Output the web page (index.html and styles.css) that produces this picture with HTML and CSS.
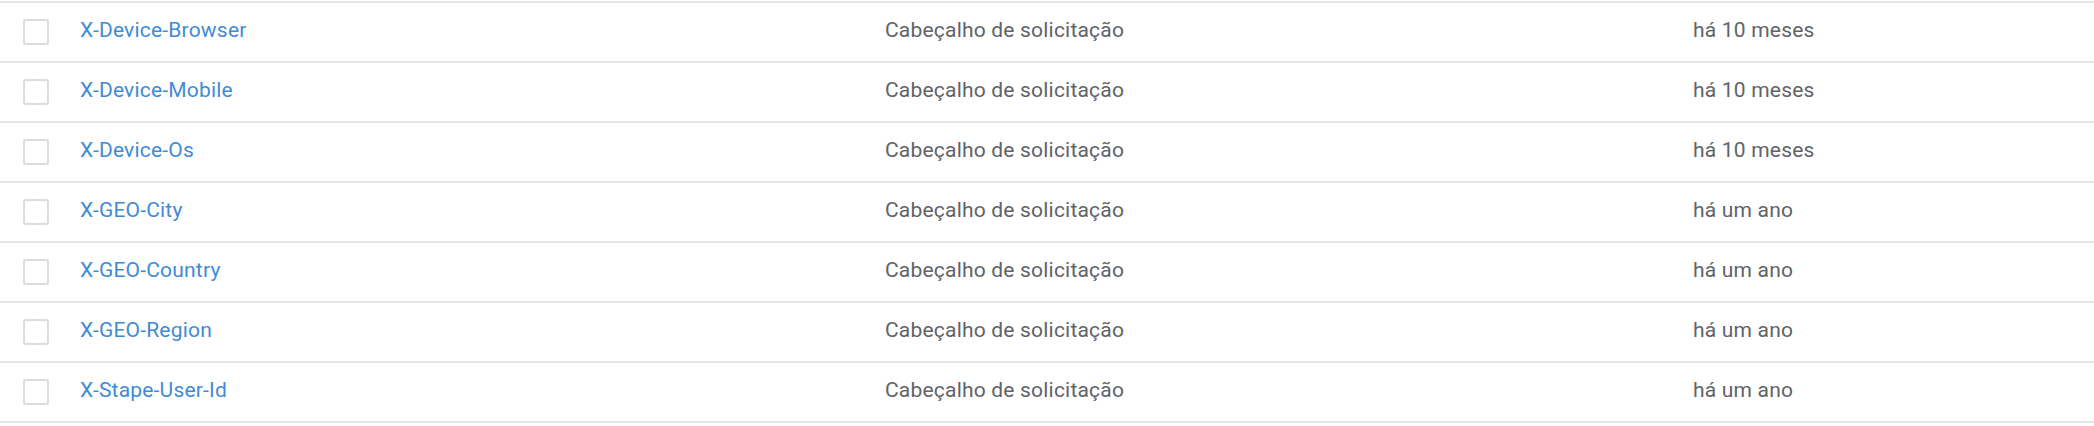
FILE: index.html
```html
<!DOCTYPE html>
<html lang="pt">
<head>
<meta charset="utf-8">
<link rel="stylesheet" href="styles.css">
</head>
<body>
<div class="table">
  <div class="row"><div class="cell check"><span class="box"></span></div><div class="cell name"><a href="#">X-Device-Browser</a></div><div class="cell type">Cabeçalho de solicitação</div><div class="cell date">há 10 meses</div></div>
  <div class="row"><div class="cell check"><span class="box"></span></div><div class="cell name"><a href="#">X-Device-Mobile</a></div><div class="cell type">Cabeçalho de solicitação</div><div class="cell date">há 10 meses</div></div>
  <div class="row"><div class="cell check"><span class="box"></span></div><div class="cell name"><a href="#">X-Device-Os</a></div><div class="cell type">Cabeçalho de solicitação</div><div class="cell date">há 10 meses</div></div>
  <div class="row"><div class="cell check"><span class="box"></span></div><div class="cell name"><a href="#">X-GEO-City</a></div><div class="cell type">Cabeçalho de solicitação</div><div class="cell date">há um ano</div></div>
  <div class="row"><div class="cell check"><span class="box"></span></div><div class="cell name"><a href="#">X-GEO-Country</a></div><div class="cell type">Cabeçalho de solicitação</div><div class="cell date">há um ano</div></div>
  <div class="row"><div class="cell check"><span class="box"></span></div><div class="cell name"><a href="#">X-GEO-Region</a></div><div class="cell type">Cabeçalho de solicitação</div><div class="cell date">há um ano</div></div>
  <div class="row"><div class="cell check"><span class="box"></span></div><div class="cell name"><a href="#">X-Stape-User-Id</a></div><div class="cell type">Cabeçalho de solicitação</div><div class="cell date">há um ano</div></div>
</div>
</body>
</html>
```

FILE: styles.css
```css
html, body {
  margin: 0;
  padding: 0;
  background: #ffffff;
}
body {
  font-family: Roboto, "Liberation Sans", sans-serif;
  font-size: 21px;
  letter-spacing: 0.2px;
  color: #5f6368;
}
.table {
  padding-top: 1px;
  border-bottom: 2px solid #e6e6e6;
}
.row {
  display: grid;
  grid-template-columns: 80px 805px 808px 1fr;
  height: 58px;
  border-top: 2px solid #e6e6e6;
}
.cell {
  display: flex;
  align-items: center;
}
.name, .type, .date {
  padding-bottom: 5px;
}
.check {
  padding-left: 23px;
}
.box {
  width: 22px;
  height: 22px;
  border: 2px solid #dcdcdc;
  border-radius: 3px;
  box-sizing: content-box;
}
.name a {
  color: #3f8bd6;
  text-decoration: none;
}
.type, .date {
  color: #5f6368;
}
```
